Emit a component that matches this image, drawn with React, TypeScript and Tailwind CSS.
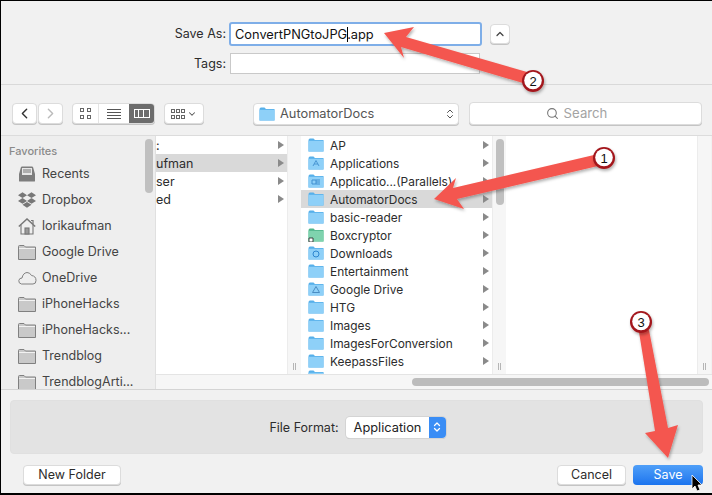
import type { ReactNode } from 'react';
import { ChevronDown, ChevronLeft, ChevronRight, ChevronUp, ChevronsUpDown, Search } from 'lucide-react';
import { FaDropbox } from 'react-icons/fa';

const favorites = ['Recents', 'Dropbox', 'lorikaufman', 'Google Drive', 'OneDrive', 'iPhoneHacks', 'iPhoneHacks...', 'Trendblog', 'TrendblogArti...'];
const firstColumn = [':', 'ufman', 'ser', 'ed'];
const folders = ['AP', 'Applications', 'Applicatio...(Parallels)', 'AutomatorDocs', 'basic-reader', 'Boxcryptor', 'Downloads', 'Entertainment', 'Google Drive', 'HTG', 'Images', 'ImagesForConversion', 'KeepassFiles'];

function Folder({ name }: { name?: string }) {
  const green = name === 'Boxcryptor';
  const top = green ? '#4fb58a' : '#57b0ea';
  const body = green ? '#7fd3ae' : '#8ed0f8';

  return (
    <svg width="16" height="14" viewBox="0 0 16 14" className="shrink-0">
      <path d="M0.5 2.5 Q0.5 0.5 2 0.5 H5.5 L7 2 H15.5 V13.5 H0.5 Z" fill={top} />
      <rect x="0.5" y="2.8" width="15" height="10.7" fill={body} />
      {name === 'Applications' ? <path d="M5 10 L8 4.5 L11 10 M6 8 H10" stroke="#4a97d4" fill="none" /> : null}
      {name === 'Applicatio...(Parallels)' ? <path d="M4 6 H8 V10 H4 Z M9 5 V11 M11 5 V11" stroke="#3f8fd0" fill="none" /> : null}
      {name === 'Downloads' ? <circle cx="8" cy="8" r="3" stroke="#2e86cf" fill="none" /> : null}
      {name === 'Google Drive' ? <path d="M8 4.5 L11.5 10.5 H4.5 Z" stroke="#4a8cc2" fill="none" /> : null}
      {green ? <path d="M1 10 H5 V14 H1 Z" fill="#fff" stroke="#222" strokeWidth="0.8" /> : null}
    </svg>
  );
}

function GreyFolder() {
  return (
    <svg width="18" height="15" viewBox="0 0 18 15" className="shrink-0">
      <path d="M0.5 14.5 V1.5 Q0.5 0.5 1.5 0.5 H6 L7.5 2 H17.5 V14.5 Z" fill="#c9c9c9" stroke="#808080" />
      <path d="M1 3.5 H17" stroke="#f2f2f2" />
    </svg>
  );
}

function FavoriteIcon({ name }: { name: string }) {
  if (name === 'Recents') {
    return (
      <svg width="18" height="16" viewBox="0 0 18 16" className="shrink-0">
        <path d="M1 8 L3 1 Q3.2 0.5 4 0.5 H14 Q14.8 0.5 15 1 L17 8 V15 Q17 15.5 16 15.5 H2 Q1 15.5 1 15 Z" fill="#7d7d7d" />
        <rect x="4" y="2" width="10" height="7" fill="#e6e6e6" />
        <path d="M5 4 H13 M5 6 H13" stroke="#777" />
      </svg>
    );
  }
  if (name === 'Dropbox') {
    return <FaDropbox size={18} className="shrink-0 text-[#777]" />;
  }
  if (name === 'lorikaufman') {
    return (
      <svg width="18" height="17" viewBox="0 0 18 17" className="shrink-0" fill="none" stroke="#777" strokeWidth="1.1">
        <path d="M0.8 8.5 L9 1 L17.2 8.5" strokeWidth="1.5" />
        <path d="M13 2.5 H15 V6" strokeWidth="1.2" />
        <path d="M3 7 V16 H15 V7" />
        <rect x="7" y="10" width="4" height="6" fill="#999" />
      </svg>
    );
  }
  if (name === 'OneDrive') {
    return (
      <svg width="19" height="14" viewBox="0 0 19 14" className="shrink-0" fill="none" stroke="#808080">
        <path d="M3.5 13 Q0.5 12.5 0.8 9.5 Q1.2 7 4 7 Q5 2 9 1.5 Q12 1.5 13.5 4.5 Q18 5 18 9.5 Q18 13 15 13 Z" />
      </svg>
    );
  }
  return <GreyFolder />;
}

function ToolButton({ className, children }: { className: string; children: ReactNode }) {
  return <div className={`flex items-center justify-center rounded-[4px] border border-[#dcdcdc] bg-white shadow-[0_1px_0_#c4c4c4] ${className}`}>{children}</div>;
}

function Triangle() {
  return <span className="ml-auto h-0 w-0 border-y-[4px] border-l-[6px] border-y-transparent border-l-[#8a8a8a]" />;
}

function GripStrip({ children }: { children?: ReactNode }) {
  return (
    <div className="relative w-[14px] shrink-0 border-l border-[#ececec] bg-[#f6f6f6]">
      {children}
      <div className="absolute bottom-[4px] left-[5px] h-[7px] w-[3px] border-x border-[#b5b5b5]" />
    </div>
  );
}

function Annotations() {
  return (
    <svg width="712" height="495" viewBox="0 0 712 495" className="pointer-events-none absolute left-[-1px] top-[-1px]">
      <defs>
        <filter id="soft" x="-20%" y="-20%" width="140%" height="140%">
          <feDropShadow dx="1" dy="2" stdDeviation="1.4" floodColor="#000" floodOpacity="0.3" />
        </filter>
      </defs>
      <g fill="#f4574f" filter="url(#soft)">
        <polygon points="434,199 456,178 453,188 594,155 598,166 457,199 464,209" />
        <polygon points="384,33 414,27 406,37 527,72 523,83 401,47 404,58" />
        <polygon points="668,458 645,433 655,431 639,332 649,330 668,428 678,425" />
      </g>
      {[
        { x: 604, y: 158, n: '1' },
        { x: 533, y: 81, n: '2' },
        { x: 641, y: 322, n: '3' },
      ].map((c) => (
        <g key={c.n}>
          <circle cx={c.x} cy={c.y} r="11" fill="#a3161b" filter="url(#soft)" />
          <circle cx={c.x} cy={c.y - 0.5} r="8.8" fill="#fff" />
          <text x={c.x} y={c.y + 4.5} textAnchor="middle" fontSize="13" fontFamily="Liberation Sans, sans-serif" fill="#111">
            {c.n}
          </text>
        </g>
      ))}
      <path d="M692 475 L692 489 L695 486 L697 491 L700 490 L698 485 L702 485 Z" fill="#000" stroke="#fff" strokeWidth="0.8" />
    </svg>
  );
}

export default function App() {
  return (
    <div className="relative flex h-[495px] w-[712px] flex-col overflow-hidden border-b-2 border-l border-t border-black bg-[#f1f1f1] font-['Inter','Noto_Sans',sans-serif] text-[12.5px] text-[#2c2c2c]">
      <header className="flex h-[84px] shrink-0 flex-col border-b border-[#d9d9d9] pt-[21px]">
        <div className="flex h-[24px] items-center">
          <span className="w-[228px] pr-[3px] pt-px text-right text-[12.5px]">Save As:</span>
          <div className="flex h-[24px] w-[253px] items-center rounded-[3px] border-2 border-[#7eaee8] bg-white pl-[4px] pt-px text-[12.8px] text-[#111]">
            ConvertPNGtoJPG<span className="mx-[-0.5px] inline-block h-[15px] w-px bg-black" />.app
          </div>
          <ToolButton className="ml-[8px] h-[20px] w-[20px]">
            <ChevronUp size={12} strokeWidth={2.5} color="#444" />
          </ToolButton>
        </div>
        <div className="mt-[7px] flex h-[21px] items-center">
          <span className="w-[228px] pr-[3px] pt-px text-right">Tags:</span>
          <div className="ml-[1px] h-[21px] w-[250px] border border-[#c9c9c9] bg-white" />
        </div>
      </header>

      <div className="flex h-[51px] shrink-0 items-start border-b border-[#dcdcdc] pl-[11px] pt-[18px]">
        <ToolButton className="h-[21px] w-[25px]">
          <ChevronLeft size={17} color="#333" />
        </ToolButton>
        <ToolButton className="ml-px h-[21px] w-[25px]">
          <ChevronRight size={17} color="#bbb" />
        </ToolButton>
        <div className="ml-[9px] flex h-[21px] w-[83px] overflow-hidden rounded-[4px] border border-[#dcdcdc] bg-white shadow-[0_1px_0_#c4c4c4]">
          <div className="flex w-[26px] items-center justify-center border-r border-[#e4e4e4]">
            <div className="grid grid-cols-2 gap-[3px]">
              <span className="h-[4px] w-[4px] border border-[#666]" />
              <span className="h-[4px] w-[4px] border border-[#666]" />
              <span className="h-[4px] w-[4px] border border-[#666]" />
              <span className="h-[4px] w-[4px] border border-[#666]" />
            </div>
          </div>
          <div className="flex w-[30px] flex-col items-center justify-center gap-[2px]">
            <span className="h-px w-[14px] bg-[#555]" />
            <span className="h-px w-[14px] bg-[#555]" />
            <span className="h-px w-[14px] bg-[#555]" />
            <span className="h-px w-[14px] bg-[#555]" />
          </div>
          <div className="flex flex-1 items-center justify-center bg-[#6c6c6c]">
            <div className="grid h-[9px] w-[16px] grid-cols-3 border border-white">
              <span className="border-r border-white" />
              <span className="border-r border-white" />
              <span />
            </div>
          </div>
        </div>
        <ToolButton className="ml-[9px] h-[21px] w-[40px] gap-[2px]">
          <div className="grid grid-cols-3 gap-x-px gap-y-[2px]">
            {[0, 1, 2, 3, 4, 5].map((i) => (
              <span key={i} className="h-[4px] w-[4px] border border-[#666]" />
            ))}
          </div>
          <ChevronDown size={10} strokeWidth={2.5} color="#555" />
        </ToolButton>
        <ToolButton className="ml-[49px] h-[22px] w-[206px] justify-start pl-[5px] pr-[2px] text-[12.8px] text-[#555]">
          <Folder />
          <span className="ml-[5px]">AutomatorDocs</span>
          <ChevronsUpDown size={12} color="#555" className="ml-auto" />
        </ToolButton>
        <ToolButton className="-mt-px ml-[10px] h-[23px] w-[233px] gap-[5px] pr-[18px] text-[13.2px] text-[#a3a3a3]">
          <Search size={13} color="#777" />
          <span>Search</span>
        </ToolButton>
      </div>

      <div className="relative flex h-[254px] shrink-0 overflow-hidden border-b border-[#d4d4d4]">
        <aside className="relative w-[155px] shrink-0 overflow-hidden border-r border-[#e0e0e0] bg-[#eeeeee] pl-[8px] pt-[7px]">
          <div className="mb-[2px] h-[16px] text-[11px] font-medium leading-[16px] text-[#8a8a8a]">Favorites</div>
          {favorites.map((name) => (
            <div key={name} className="flex h-[26px] items-center gap-[6px] pl-[9px] text-[#444]">
              <span className="flex w-[18px] shrink-0 justify-center">
                <FavoriteIcon name={name} />
              </span>
              <span className="whitespace-nowrap">{name}</span>
            </div>
          ))}
          <div className="absolute left-[144px] top-[3px] h-[54px] w-[8px] rounded-full bg-[#c0c0c0]" />
        </aside>

        <div className="flex h-[238px] w-full min-w-0 text-[11.9px]">
          <section className="w-[131px] shrink-0 bg-white">
            {firstColumn.map((row) => (
              <div key={row} className={`flex h-[18px] items-center pr-[3px] ${row === 'ufman' ? 'bg-[#d9d9d9]' : ''}`}>
                <span className="pt-[2px] text-[12.5px]">{row}</span>
                <Triangle />
              </div>
            ))}
          </section>
          <GripStrip />

          <section className="w-[191px] shrink-0 overflow-hidden bg-white">
            {folders.map((name) => (
              <div key={name} className={`flex h-[18px] items-center gap-[6px] pl-[7px] pr-[3px] ${name === 'AutomatorDocs' ? 'bg-[#d9d9d9]' : ''}`}>
                <Folder name={name} />
                <span className="whitespace-nowrap pt-px">{name}</span>
                <Triangle />
              </div>
            ))}
            <div className="pl-[7px]">
              <Folder />
            </div>
          </section>
          <GripStrip>
            <div className="absolute left-[3px] top-[3px] h-[66px] w-[8px] rounded-full bg-[#c0c0c0]" />
          </GripStrip>

          <section className="w-[191px] shrink-0 bg-white" />
          <GripStrip />
        </div>

        <div className="absolute bottom-0 left-[155px] right-0 flex h-[15px] items-center border-t border-[#e4e4e4] bg-[#f6f6f6]">
          <div className="ml-[256px] h-[8px] w-[297px] rounded-full bg-[#bcbcbc]" />
        </div>
      </div>

      <div className="flex min-h-0 flex-1 flex-col px-[9px] pt-[10px]">
        <div className="flex h-[54px] items-center justify-center rounded-[4px] border border-[#e0e0e0] bg-[#e3e3e3]">
          <span className="ml-[2px] pt-[2px]">File Format:</span>
          <div className="ml-[7px] flex h-[21px] w-[100px] overflow-hidden rounded-[4px] bg-white shadow-[0_0_0_1px_#d4d4d4,0_1px_0_#bbb]">
            <span className="flex-1 pl-[8px] text-[12.8px] leading-[21px] text-[#222]">Application</span>
            <span className="flex w-[17px] items-center justify-center bg-[#3a8df5]">
              <ChevronsUpDown size={12} strokeWidth={2.5} color="#fff" />
            </span>
          </div>
        </div>
        <div className="mt-[11px] flex items-start">
          <ToolButton className="ml-[13px] h-[20px] w-[98px] pt-px">New Folder</ToolButton>
          <ToolButton className="ml-auto h-[20px] w-[69px] pt-px">Cancel</ToolButton>
          <div className="ml-[7px] flex h-[20px] w-[70px] items-center justify-center rounded-[4px] bg-gradient-to-b from-[#4f9ff8] to-[#1b74ee] pt-px text-white">Save</div>
        </div>
      </div>

      <Annotations />
    </div>
  );
}
